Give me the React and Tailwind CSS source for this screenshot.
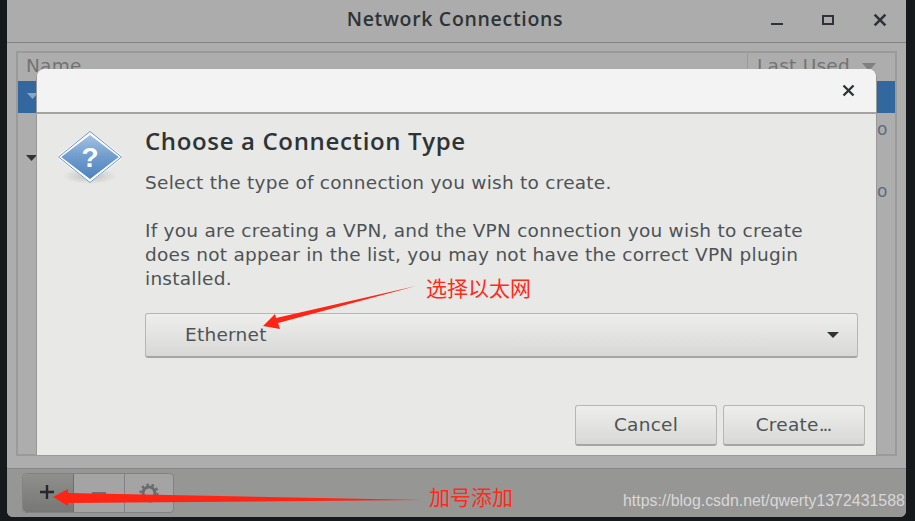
const font = { fontFamily: '"DejaVu Sans",sans-serif' };
const titleFont = { fontFamily: '"Open Sans",sans-serif' };

function Help() {
  return (
    <svg width="68" height="56" viewBox="0 0 68 56" className="shrink-0">
      <defs>
        <linearGradient id="g" x1="0" y1="0" x2="0" y2="1">
          <stop offset="0" stopColor="#a9c5e3" />
          <stop offset="0.5" stopColor="#6f9ccd" />
          <stop offset="1" stopColor="#4c7fbb" />
        </linearGradient>
        <radialGradient id="s">
          <stop offset="0" stopColor="#000" stopOpacity="0.18" />
          <stop offset="1" stopColor="#000" stopOpacity="0" />
        </radialGradient>
      </defs>
      <ellipse cx="33" cy="45" rx="27" ry="8" fill="url(#s)" />
      <path d="M33 2 L63 25 Q64 26 63 27 L33 50 L3 27 Q2 26 3 25 Z" fill="url(#g)" stroke="#fff" strokeWidth="3" strokeLinejoin="round" />
      <path d="M33 0.5 L64.5 26 L33 51.5 L1.5 26 Z" fill="none" stroke="#6d93c4" strokeWidth="1" strokeLinejoin="round" />
      <text x="33" y="36" textAnchor="middle" fontSize="28" fontWeight="700" fill="#fff" fontFamily="Liberation Sans">?</text>
    </svg>
  );
}

const btn = "rounded-[3px] border border-[#b6b6b3] border-b-2 border-b-[#a5a5a2] bg-gradient-to-b from-[#eeeeec] to-[#d8d8d6]";

export default function App() {
  return (
    <div className="relative w-[915px] h-[521px] overflow-hidden flex bg-[#15191b]" style={font}>
      <div className="w-[7px] shrink-0" />
      <div className="w-[899px] h-[517px] flex flex-col bg-[#adadad] rounded-b-md">
        <div className="h-[43px] shrink-0 flex items-center border-b border-[#838383] bg-[#acacac] rounded-tr-lg">
          <div className="ml-[148px] w-[600px] shrink-0 text-center text-[19.5px] font-semibold tracking-[0.68px] pb-[5px] text-[#2e3436]" style={titleFont}>Network Connections</div>
          <div className="ml-auto flex items-center gap-[39px] pr-[19px] pb-[3px] text-[#2e3436]">
            <span className="w-3 h-[2px] mt-[8px] bg-[#2e3436]" />
            <span className="w-3 h-[10px] border-2 border-[#2e3436]" />
            <svg width="14" height="14" viewBox="0 0 13 13"><path d="M1.5 1.5 L11.5 11.5 M11.5 1.5 L1.5 11.5" stroke="#2e3436" strokeWidth="2.4" /></svg>
          </div>
        </div>
        <div className="flex-1 px-[9px] pt-[8px] pb-[12px] flex flex-col">
          <div className="flex-1 border-2 border-[#9a9a9a] flex flex-col">
            <div className="h-[28px] flex shrink-0 text-[18.5px] tracking-[0.25px] text-[#737373]">
              <div className="flex-1 pl-[8px] leading-[26px]">Name</div>
              <div className="w-[148px] border-l border-[#9a9a9a] pl-[9px] leading-[26px] flex items-start gap-[12px]">
                Last Used
                <svg width="14" height="8" viewBox="0 0 14 8" className="mt-[10px]"><path d="M0 0H14L7 8Z" fill="#808080" /></svg>
              </div>
            </div>
            <div className="h-[32px] shrink-0 bg-[#33689f] pl-[9px] pt-[12px]">
              <svg width="11" height="6" viewBox="0 0 11 6"><path d="M0 0H11L5.5 6Z" fill="#8da5c0" /></svg>
            </div>
            <div className="pl-[8px] pt-[42px]">
              <svg width="11" height="6" viewBox="0 0 11 6"><path d="M0 0H11L5.5 6Z" fill="#333" /></svg>
            </div>
          </div>
        </div>
        <div className="h-[49px] shrink-0 bg-[#969694] border-t border-[#858585] rounded-b-md pl-[15px] pt-[4px]">
          <div className="flex w-[152px] h-[40px] border border-[#828282] rounded-[4px] bg-[#a4a4a4]">
            <div className="w-[51px] border-r border-[#6f6f6f] rounded-l-[4px] bg-gradient-to-b from-[#8f8f8d] to-[#777775] flex items-center justify-center pr-[3px] pb-[3px]">
              <svg width="14" height="14" viewBox="0 0 14 14"><path d="M7 0V14M0 7H14" stroke="#23282a" strokeWidth="2.4" /></svg>
            </div>
            <div className="w-[51px] border-r border-[#828282] flex items-center justify-center pt-[1px]">
              <span className="w-[14px] h-[2.5px] bg-[#6e6e6e]" />
            </div>
            <div className="flex-1 flex items-center justify-center">
              <svg width="20" height="20" viewBox="0 0 20 20"><circle cx="10" cy="10" r="6" fill="none" stroke="#6a6a6a" strokeWidth="3" /><circle cx="10" cy="10" r="8.5" fill="none" stroke="#6a6a6a" strokeWidth="2.2" strokeDasharray="2.6 2.7" /></svg>
            </div>
          </div>
        </div>
      </div>
      <div className="w-[9px] shrink-0" />

      <span className="absolute left-[877px] top-[119px] text-[17px] leading-5 text-[#5f6b7d]">o</span>
      <span className="absolute left-[877px] top-[181px] text-[17px] leading-5 text-[#5f6b7d]">o</span>

      <div className="absolute left-[36px] top-[69px] w-[841px] h-[387px] flex flex-col rounded-t-lg border-r border-b border-l border-[#999] bg-[#e8e8e7]">
        <div className="h-[45px] shrink-0 bg-[#f3f3f3] rounded-t-lg border-b-2 border-[#a3a3a0] flex items-center justify-end pr-[21px]">
          <svg width="13" height="13" viewBox="0 0 13 13"><path d="M1.5 1.5 L11.5 11.5 M11.5 1.5 L1.5 11.5" stroke="#2e3436" strokeWidth="2.4" /></svg>
        </div>
        <div className="flex-1 flex pl-[20px] pr-[18px] pt-[14px]">
          <div className="w-[88px] shrink-0 pt-[3px]"><Help /></div>
          <div className="flex-1 text-[#4e5354]">
            <div className="text-[24px] leading-[26px] font-semibold tracking-[0.65px] text-[#2e3436]" style={titleFont}>Choose a Connection Type</div>
            <div className="text-[18.5px] tracking-[0.25px]">
              <p className="mt-[17px] leading-[24px]">Select the type of connection you wish to create.</p>
              <p className="mt-[24px] leading-[24px] whitespace-nowrap">If you are creating a VPN, and the VPN connection you wish to create<br />does not appear in the list, you may not have the correct VPN plugin<br />installed.</p>
              <div className={`mt-[22px] h-[45px] w-[713px] ${btn} flex items-center justify-between pl-[39px] pr-[18px] text-[#4e5354]`}>
                Ethernet
                <svg width="12" height="6" viewBox="0 0 12 6"><path d="M0 0H12L6 6Z" fill="#2e3436" /></svg>
              </div>
              <div className="mt-[47px] flex justify-end gap-[6px] w-[720px]">
                <div className={`w-[142px] h-[41px] ${btn} flex items-center justify-center`}>Cancel</div>
                <div className={`w-[142px] h-[41px] ${btn} flex items-center justify-center`}>Create<span className="tracking-[-2px] pr-[2px]">...</span></div>
              </div>
            </div>
          </div>
        </div>
      </div>

      <svg className="absolute left-0 top-0 pointer-events-none" width="915" height="521" viewBox="0 0 915 521">
        <path d="M263 326 L275 314 L276 318 L416 286 L278 323 L280 329 Z" fill="#ff2414" />
        <path d="M53 497 L68 489 L68 493 L422 500 L68 503 L68 506 Z" fill="#ff2414" />
      </svg>
      <span className="absolute left-[426px] top-[275px] text-[21px] leading-6 text-[#ff2a1a]" style={{ fontFamily: '"Noto Sans CJK SC",sans-serif' }}>选择以太网</span>
      <span className="absolute left-[429px] top-[484px] text-[21px] leading-6 text-[#ff2a1a]" style={{ fontFamily: '"Noto Sans CJK SC",sans-serif' }}>加号添加</span>
      <span className="absolute left-[623px] top-[491px] text-[15.9px] leading-5 text-[#d8d8d8]" style={{ fontFamily: '"Liberation Sans",sans-serif' }}>https://blog.csdn.net/qwerty1372431588</span>
    </div>
  );
}
